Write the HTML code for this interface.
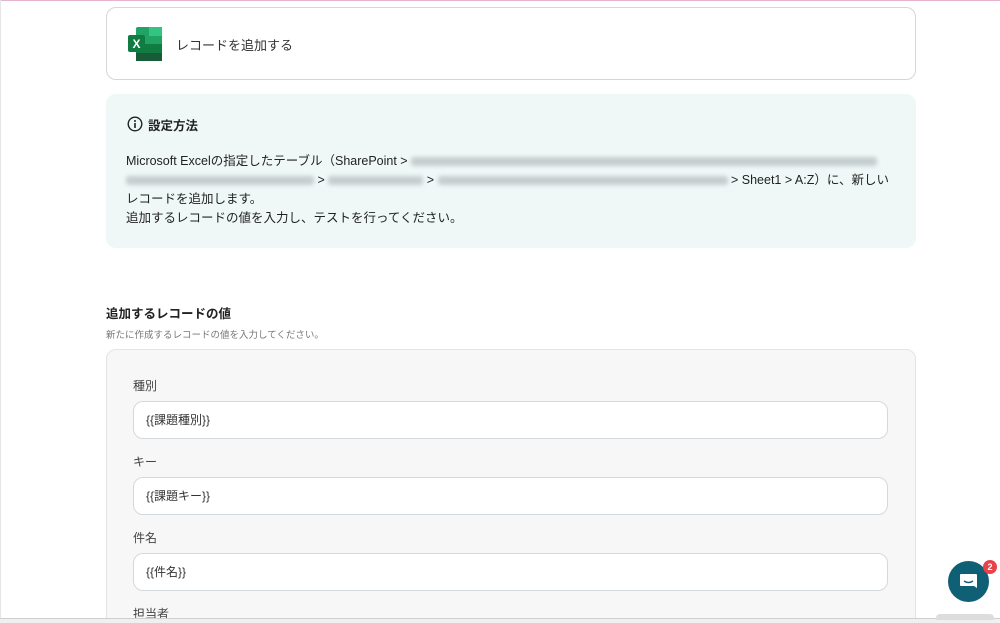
<!DOCTYPE html>
<html><head><meta charset="utf-8"><style>
*{box-sizing:border-box;margin:0;padding:0}
html,body{width:1000px;height:623px;overflow:hidden}
body{background:#fff;position:relative;font-family:"Liberation Sans","Noto Sans CJK JP",sans-serif;color:#222}
.topline{position:absolute;left:0;top:0;width:1000px;height:1px;background:#e4b4d0}
.leftline{position:absolute;left:0;top:0;width:1px;height:623px;background:#e6e6e6}
.card{position:absolute;left:106px;top:7px;width:810px;height:73px;border:1px solid #d6d6d6;border-radius:10px;background:#fff}
.card .t{position:absolute;left:69px;top:27px;font-size:13px;color:#333}
.info{position:absolute;left:106px;top:94px;width:810px;height:154px;background:#eff8f7;border-radius:10px}
.info h3{position:absolute;left:42px;top:21px;font-size:12.5px;font-weight:bold}
.info p{position:absolute;left:20px;top:58px;width:790px;font-size:12.5px;line-height:19px;color:#222;white-space:nowrap}
.blur{display:inline-block;vertical-align:middle;height:9px;background:#c5cdce;filter:blur(2px);border-radius:3px}
.sec{position:absolute;left:106px;top:303px;font-size:12.5px;font-weight:bold}
.sub{position:absolute;left:106px;top:327px;font-size:9.5px;color:#777}
.box{position:absolute;left:106px;top:349px;width:810px;height:290px;background:#f7f7f7;border:1px solid #e4e4e4;border-radius:10px}
.lb{position:absolute;left:133px;font-size:12px;color:#444}
.in{position:absolute;left:133px;width:755px;height:38px;background:#fff;border:1px solid #d3d8dd;border-radius:10px;font-size:12px;padding-left:12px;line-height:36px;color:#333}
.bottom{position:absolute;left:0;top:618px;width:1000px;height:5px;background:#f0f0f0;border-top:1px solid #cfcfcf}
.chat{position:absolute;left:948px;top:561px;width:41px;height:41px;border-radius:50%;background:#0f5f75}
.badge{position:absolute;left:983px;top:560px;width:14px;height:14px;border-radius:50%;background:#e9424a;color:#fff;font-size:9px;font-weight:bold;text-align:center;line-height:14px}
.tab{position:absolute;left:936px;top:614px;width:58px;height:6px;background:#ddd;border-radius:4px 4px 0 0}
</style></head><body>
<div class="topline"></div><div class="leftline"></div>
<div class="card">
<svg style="position:absolute;left:20px;top:18px" width="36" height="36" viewBox="0 0 36 36">
<rect x="9" y="1" width="26" height="34" rx="2" fill="#21a366"/>
<rect x="22" y="1" width="13" height="9" fill="#33c481"/>
<rect x="9" y="18" width="26" height="9" fill="#107c41"/>
<rect x="9" y="27" width="26" height="8" fill="#185c37"/>
<rect x="1" y="9" width="17" height="17" rx="2" fill="#107c41"/>
<text x="9.5" y="22" font-size="12" font-weight="bold" fill="#fff" text-anchor="middle" font-family="Liberation Sans">X</text>
</svg>
<div class="t">レコードを追加する</div></div>
<div class="info">
<svg style="position:absolute;left:21px;top:22px" width="16" height="16" viewBox="0 0 16 16"><circle cx="8" cy="8" r="6.8" fill="none" stroke="#222" stroke-width="1.4"/><circle cx="8" cy="5" r="1" fill="#222"/><rect x="7.2" y="7" width="1.6" height="5" fill="#222"/></svg>
<h3>設定方法</h3>
<p>Microsoft Excelの指定したテーブル（SharePoint &gt; <span class="blur" style="width:466px"></span><br><span class="blur" style="width:188px"></span> &gt; <span class="blur" style="width:95px"></span> &gt; <span class="blur" style="width:290px"></span> &gt; Sheet1 &gt; A:Z）に、新しい<br>レコードを追加します。<br>追加するレコードの値を入力し、テストを行ってください。</p></div>
<div class="sec">追加するレコードの値</div>
<div class="sub">新たに作成するレコードの値を入力してください。</div>
<div class="box"></div>
<div class="lb" style="top:377px">種別</div><div class="in" style="top:401px">{{課題種別}}</div>
<div class="lb" style="top:453px">キー</div><div class="in" style="top:477px">{{課題キー}}</div>
<div class="lb" style="top:529px">件名</div><div class="in" style="top:553px">{{件名}}</div>
<div class="lb" style="top:605px">担当者</div>
<div class="bottom"></div><div class="tab"></div>
<div class="chat"><svg width="41" height="41" viewBox="0 0 41 41"><path d="M13 13h15a1 1 0 0 1 1 1v13l-3-2H13a1 1 0 0 1-1-1V14a1 1 0 0 1 1-1z" fill="#fff"/><path d="M16 20q4.5 3 9 0" stroke="#0f5f75" stroke-width="1.5" fill="none"/></svg></div>
<div class="badge">2</div>
</body></html>
